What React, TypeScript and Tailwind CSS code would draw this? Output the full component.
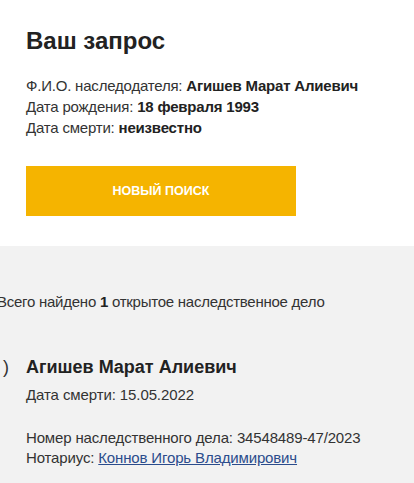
const query = [
  { label: "Ф.И.О. наследодателя:", value: "Агишев Марат Алиевич" },
  { label: "Дата рождения:", value: "18 февраля 1993" },
  { label: "Дата смерти:", value: "неизвестно" },
];

function App() {
  return (
    <div className="w-[414px] h-[483px] overflow-hidden bg-white text-[#333] font-['Liberation_Sans',Arial,sans-serif]">
      <section className="px-[26px] pt-[27px] pb-[30px]">
        <h1 className="text-[24px] leading-[28px] font-bold text-[#222]">Ваш запрос</h1>
        <div className="mt-[20px] text-[15px] leading-[21px] tracking-[-0.2px]">
          {query.map((q) => (
            <p key={q.label}>
              {q.label} <b className="text-[#222]">{q.value}</b>
            </p>
          ))}
        </div>
        <button className="mt-[28px] w-[270px] h-[50px] bg-[#f5b400] text-white text-[12.5px] font-bold uppercase">
          Новый поиск
        </button>
      </section>

      <section className="bg-[#f2f2f2] h-full pt-[47px]">
        <p className="-ml-[3px] text-[15px] leading-[18px] tracking-[-0.25px]">
          Всего найдено <b className="text-[#222]">1</b> открытое наследственное дело
        </p>
        <ol className="mt-[45px]">
          <li className="flex">
            <span className="w-[36px] -ml-[10px] shrink-0 text-[18px] leading-[22px] tracking-[3px]">1)</span>
            <div>
              <p className="text-[18px] leading-[22px] font-bold text-[#222]">Агишев Марат Алиевич</p>
              <p className="mt-[7px] text-[15px] leading-[20px] tracking-[-0.1px]">Дата смерти: 15.05.2022</p>
              <p className="mt-[23px] text-[15px] leading-[20px] tracking-[-0.15px]">Номер наследственного дела: 34548489-47/2023</p>
              <p className="text-[15px] leading-[20px] tracking-[-0.15px]">
                Нотариус: <a href="#" className="text-[#2b4c8c] underline">Коннов Игорь Владимирович</a>
              </p>
            </div>
          </li>
        </ol>
      </section>
    </div>
  );
}

export default App;
